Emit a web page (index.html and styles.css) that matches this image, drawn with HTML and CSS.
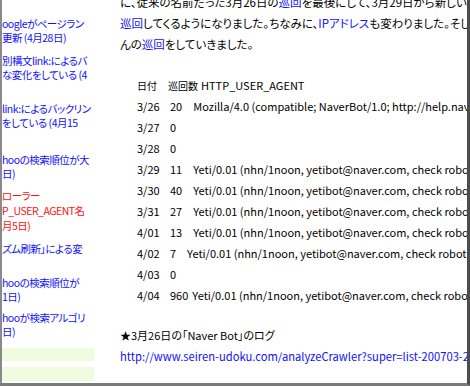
FILE: index.html
```html
<!DOCTYPE html>
<html lang="ja">
  <head>
    <meta charset="utf-8">
    <title>NaverBot のログ</title>
    <link rel="stylesheet" href="styles.css">
  </head>
  <body>
    <div class="frame">
      <div class="side">
        <div class="item">oogleがページラン<br>更新 (4月28日)</div>
        <div class="item gap-a">別構文link:によるバ<br>な変化をしている (4</div>
        <div class="item gap-b">link:によるバックリン<br>をしている (4月15</div>
        <div class="item gap-c">hooの検索順位が大<br>日)</div>
        <div class="item gap-d hot">ローラー<br>P_USER_AGENT名<br>月5日)</div>
        <div class="item gap-a">ズム刷新」による変</div>
        <div class="item gap-b">hooの検索順位が<br>1日)</div>
        <div class="item gap-d">hooが検索アルゴリ<br>日)</div>
        <div class="box gap-a"></div>
        <div class="box box-2"></div>
      </div>
      <div class="main">
        <p class="intro">
          に、従来の名前だった3月26日の<a href="#">巡回</a>を最後にして、3月29日から新しい名前で<br>
          <a href="#">巡回</a>してくるようになりました。ちなみに、<a href="#">IPアドレス</a>も変わりました。そして、たくさ<br>
          んの<a href="#">巡回</a>をしていきました。
        </p>
        <div class="log">
          <div class="row head"><span class="d">日付</span><span class="n">巡回数</span>HTTP_USER_AGENT</div>
          <div class="row"><span class="d">3/26</span><span class="n">20</span>Mozilla/4.0 (compatible; NaverBot/1.0; http://help.naver.com/delete_main.asp)</div>
          <div class="row"><span class="d">3/27</span><span class="n">0</span></div>
          <div class="row"><span class="d">3/28</span><span class="n">0</span></div>
          <div class="row"><span class="d">3/29</span><span class="n">11</span>Yeti/0.01 (nhn/1noon, yetibot@naver.com, check robots.txt daily and follows it)</div>
          <div class="row"><span class="d">3/30</span><span class="n">40</span>Yeti/0.01 (nhn/1noon, yetibot@naver.com, check robots.txt daily and follows it)</div>
          <div class="row"><span class="d">3/31</span><span class="n">27</span>Yeti/0.01 (nhn/1noon, yetibot@naver.com, check robots.txt daily and follows it)</div>
          <div class="row"><span class="d">4/01</span><span class="n">13</span>Yeti/0.01 (nhn/1noon, yetibot@naver.com, check robots.txt daily and follows it)</div>
          <div class="row"><span class="d">4/02</span><span class="n">7</span>Yeti/0.01 (nhn/1noon, yetibot@naver.com, check robots.txt daily and follows it)</div>
          <div class="row"><span class="d">4/03</span><span class="n">0</span></div>
          <div class="row"><span class="d">4/04</span><span class="n tight">960</span>Yeti/0.01 (nhn/1noon, yetibot@naver.com, check robots.txt daily and follows it)</div>
        </div>
        <p class="note">★3月26日の「Naver Bot」のログ</p>
        <p class="url"><a href="#">http://www.seiren-udoku.com/analyzeCrawler?super=list-200703-26</a></p>
      </div>
    </div>
  </body>
</html>
```

FILE: styles.css
```css
html, body {
  margin: 0px;
  padding: 0px;
  background: white;
}
.frame {
  display: flex;
  width: 465px;
  height: 383px;
  border-left: 2px solid #8a8a8a;
  border-right: 3px solid #4c4c4c;
  border-bottom: 3px solid #7a7a7a;
  overflow: hidden;
  font-family: "Noto Sans CJK JP", sans-serif;
  font-feature-settings: "palt";
  font-size: 11.5px;
  color: black;
}
a {
  color: #1010ff;
  text-decoration: none;
}
p {
  margin: 0px;
}

/* left column, cut at its left edge */
.side {
  width: 118px;
  flex: none;
  display: flex;
  flex-direction: column;
  padding-top: 17px;
  color: #1010ff;
  font-size: 10.5px;
  letter-spacing: -0.5px;
  white-space: nowrap;
  line-height: 14px;
}
.hot {
  color: #ff1010;
  line-height: 15px;
}
.gap-a { margin-top: 9px; }
.gap-b { margin-top: 20px; }
.gap-c { margin-top: 23px; }
.gap-d { margin-top: 7px; }
.box {
  width: 92px;
  height: 13px;
  background: #effcdf;
}
.box-2 {
  height: 14px;
  margin-top: 6px;
}

/* article */
.main {
  flex: 1;
  min-width: 0;
  margin-top: -8px;
  white-space: nowrap;
  line-height: 21px;
}
.log {
  margin-top: 20px;
  padding-left: 17px;
  font-size: 11px;
}
.row {
  display: flex;
}
.d {
  width: 33px;
  flex: none;
}
.n {
  margin-right: 11px;
}
.n.tight {
  margin-right: 4px;
}
.head .d,
.head .n {
  font-size: 10px;
}
.head .d {
  width: 31px;
}
.head .n {
  margin-right: 3px;
}
.note {
  margin-top: 19px;
  font-size: 11px;
}
.url {
  font-size: 11.2px;
}
```
